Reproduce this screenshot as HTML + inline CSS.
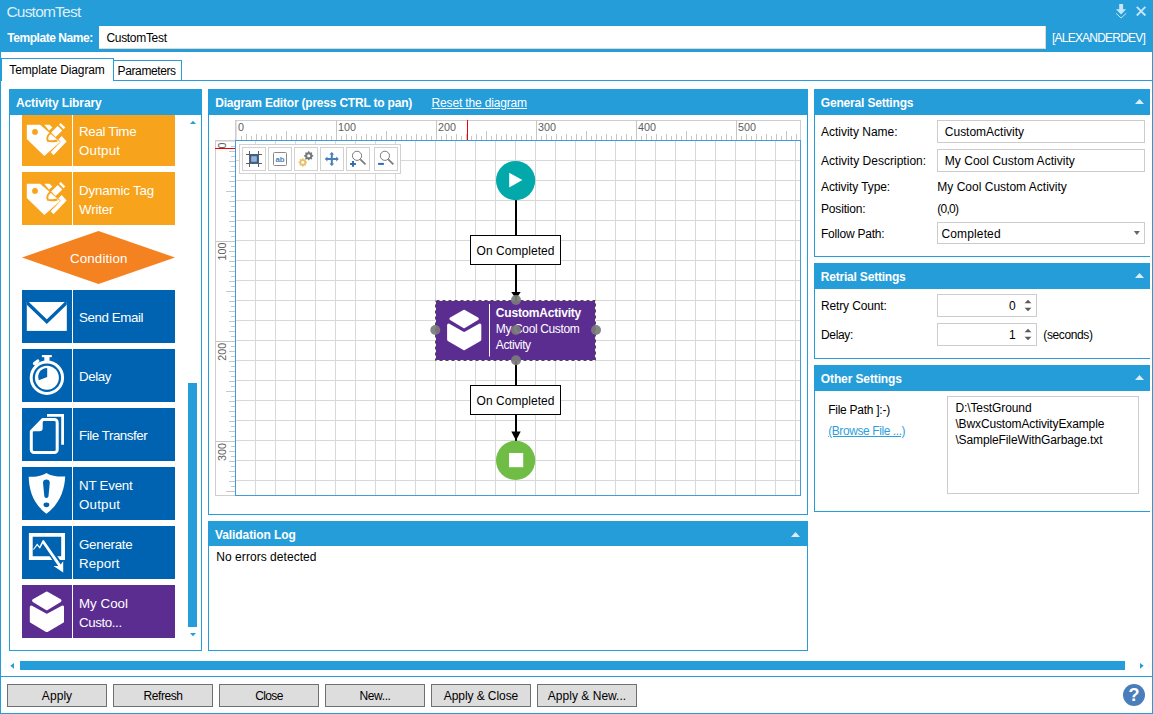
<!DOCTYPE html>
<html lang="en">
<head>
<meta charset="utf-8">
<title>CustomTest</title>
<style>
html,body{margin:0;padding:0;background:#fff;}
body{width:1153px;height:714px;overflow:hidden;font-family:"Liberation Sans",sans-serif;}
#app{position:relative;width:1153px;height:714px;overflow:hidden;background:#fff;}
#app div,#app svg,#app span{position:absolute;box-sizing:border-box;}
.t{white-space:pre;font-family:"Liberation Sans",sans-serif;}
.b{background:#259dd9;}
.pn{border:1px solid #259dd9;background:#fff;}
.hd{background:#259dd9;}
.in{border:1px solid #cecbcb;background:#fff;}
.btn{border:1px solid #707070;background:#dddddd;height:23px;top:684px;width:100px;}
.tile{width:153px;height:53px;left:22px;}
.tile i{position:absolute;left:50px;top:0;width:1px;height:53px;background:#fff;}
.tb{width:24px;height:24px;top:147px;border:1px solid #d3d0d0;background:#fff;}

</style>
</head>
<body>
<div id="app">
<!-- window frame -->
<div class="b" style="left:0;top:0;width:1153px;height:52px;"></div>
<div class="b" style="left:0;top:52px;width:1px;height:662px;"></div>
<div class="b" style="left:1152px;top:52px;width:1px;height:662px;"></div>
<div class="b" style="left:0;top:713px;width:1153px;height:1px;"></div>
<div class="b" style="left:0;top:676px;width:1153px;height:1px;"></div>
<!-- header controls -->
<div style="left:99px;top:26px;width:947px;height:23px;background:#fff;border-right:1px solid #e3d9cf;border-bottom:1px solid #e3d9cf;"></div>
<svg style="left:1112px;top:2px;" width="38" height="20" viewBox="0 0 38 20">
  <g fill="#c6e6f7" stroke="none">
    <path d="M7.2 2h3.9v5.2h3L9.1 12.6 3.9 7.2h3.3z"/>
  </g>
  <path d="M4 11.3l5.1 4.7 5.1-4.7" fill="none" stroke="#c6e6f7" stroke-width="1"/>
  <path d="M24.8 4.9l8.6 8.6M33.4 4.9l-8.6 8.6" fill="none" stroke="#c6e6f7" stroke-width="1.8"/>
</svg>
<!-- tabs -->
<div class="b" style="left:1px;top:80px;width:1151px;height:1px;"></div>
<div style="left:113px;top:60px;width:69px;height:21px;border:1px solid #259dd9;background:#fff;"></div>
<div style="left:1px;top:58px;width:113px;height:23px;border:1px solid #259dd9;border-bottom:none;background:#fff;"></div>
<!-- panels -->
<div class="pn" style="left:9px;top:89px;width:193px;height:562px;"></div>
<div class="hd" style="left:9px;top:89px;width:193px;height:26px;"></div>
<div class="pn" style="left:208px;top:89px;width:600px;height:426px;"></div>
<div class="hd" style="left:208px;top:89px;width:600px;height:26px;"></div>
<div class="pn" style="left:208px;top:521px;width:600px;height:130px;"></div>
<div class="hd" style="left:208px;top:521px;width:600px;height:25px;"></div>
<div class="pn" style="left:814px;top:89px;width:340px;height:168px;"></div>
<div class="hd" style="left:814px;top:89px;width:336px;height:26px;"></div>
<div class="pn" style="left:814px;top:263px;width:340px;height:96px;"></div>
<div class="hd" style="left:814px;top:263px;width:336px;height:26px;"></div>
<div class="pn" style="left:814px;top:365px;width:340px;height:147px;"></div>
<div class="hd" style="left:814px;top:365px;width:336px;height:26px;"></div>
<div style="left:1150px;top:82px;width:2px;height:580px;background:#fff;"></div>
<div class="b" style="left:1152px;top:52px;width:1px;height:662px;"></div>
<!-- header collapse arrows -->
<svg style="left:791px;top:532px;" width="9" height="5" viewBox="0 0 9 5"><path d="M0 5L4.500 0 9 5z" fill="#d9eefa"/></svg>
<svg style="left:1135px;top:99.200px;" width="9" height="5" viewBox="0 0 9 5"><path d="M0 5L4.500 0 9 5z" fill="#d9eefa"/></svg>
<svg style="left:1135px;top:273.200px;" width="9" height="5" viewBox="0 0 9 5"><path d="M0 5L4.500 0 9 5z" fill="#d9eefa"/></svg>
<svg style="left:1135px;top:375.200px;" width="9" height="5" viewBox="0 0 9 5"><path d="M0 5L4.500 0 9 5z" fill="#d9eefa"/></svg>

<!-- activity library tiles -->
<div style="left:10px;top:115px;width:191px;height:535px;overflow:hidden;">
<div style="left:-10px;top:-115px;width:210px;height:700px;">
<!-- tag tiles -->
<div class="tile" style="top:113px;background:#f7a31c;"><i></i>
<svg width="50" height="53" viewBox="0 0 50 53" style="left:0;top:0;">
  <path d="M4.8 11.8H18.1L38.2 29 22.3 42.9 4.8 26.1z" fill="#fff"/>
  <path d="M22.3 11.8h5.2l2.9 2.6-3.4 3.1z" fill="#fff"/>
  <circle cx="13" cy="18.9" r="2.9" fill="#f7a31c"/>
  <path d="M39.7 23l4.9 5.6-13.1 13.6-2.8-2.9 10-10.3-2.2-2.8z" fill="#fff"/>
  <path d="M29 19.5l8.2-8.2 4.8 4.8-8.2 8.2" fill="none" stroke="#f7a31c" stroke-width="2.4"/>
  <path d="M29.2 19.6c-3.5 2-4.6 5.5-3.3 8.3 3.4.8 6.4.5 9.6-.4" fill="none" stroke="#f7a31c" stroke-width="2"/>
  <path d="M35.7 12.9l4.6 4.6-6.7 6.5-4.4-4.4z" fill="#fff"/>
  <path d="M38.7 10.1l4.6 4.5-1.7 1.7-4.6-4.5z" fill="#fff"/>
  <path d="M27.7 21.8l3.8 3.4-4.2.4z" fill="#fff"/>
</svg></div>
<div class="tile" style="top:172px;background:#f7a31c;"><i></i>
<svg width="50" height="53" viewBox="0 0 50 53" style="left:0;top:0;">
  <path d="M4.8 11.8H18.1L38.2 29 22.3 42.9 4.8 26.1z" fill="#fff"/>
  <path d="M22.3 11.8h5.2l2.9 2.6-3.4 3.1z" fill="#fff"/>
  <circle cx="13" cy="18.9" r="2.9" fill="#f7a31c"/>
  <path d="M39.7 23l4.9 5.6-13.1 13.6-2.8-2.9 10-10.3-2.2-2.8z" fill="#fff"/>
  <path d="M29 19.5l8.2-8.2 4.8 4.8-8.2 8.2" fill="none" stroke="#f7a31c" stroke-width="2.4"/>
  <path d="M29.2 19.6c-3.5 2-4.6 5.5-3.3 8.3 3.4.8 6.4.5 9.6-.4" fill="none" stroke="#f7a31c" stroke-width="2"/>
  <path d="M35.7 12.9l4.6 4.6-6.7 6.5-4.4-4.4z" fill="#fff"/>
  <path d="M38.7 10.1l4.6 4.5-1.7 1.7-4.6-4.5z" fill="#fff"/>
  <path d="M27.7 21.8l3.8 3.4-4.2.4z" fill="#fff"/>
</svg></div>
<!-- condition -->
<svg width="153" height="53" viewBox="0 0 153 53" style="left:22px;top:231px;"><path d="M0 26.5L76.5 0 153 26.5 76.5 53z" fill="#f58220"/></svg>
<!-- send email -->
<div class="tile" style="top:290px;background:#0063b1;"><i></i>
<svg width="50" height="53" viewBox="0 0 50 53" style="left:0;top:0;">
  <defs><clipPath id="env"><rect x="4.8" y="12" width="40" height="28.9"/></clipPath></defs>
  <rect x="4.8" y="12" width="40" height="28.9" fill="#fff"/>
  <path d="M2 9.7l22.8 22 22.8-22" fill="none" stroke="#0063b1" stroke-width="3.4" clip-path="url(#env)"/>
</svg></div>
<!-- delay -->
<div class="tile" style="top:349px;background:#0063b1;"><i></i>
<svg width="50" height="53" viewBox="0 0 50 53" style="left:0;top:0;">
  <circle cx="24.9" cy="28.7" r="15.7" fill="none" stroke="#fff" stroke-width="3"/>
  <circle cx="24.9" cy="28.7" r="12" fill="#fff"/>
  <path d="M25.200 27.900V18.900A9 9 0 0 0 16.860 31.270z" fill="#0063b1"/>
  <rect x="19.9" y="6" width="9.9" height="2.2" fill="#fff"/>
  <rect x="22.3" y="7" width="5.2" height="6" fill="#fff"/>
  <path d="M12.500 14.600l3.300-2.600" stroke="#fff" stroke-width="3.300" stroke-linecap="round"/>
</svg></div>
<!-- file transfer -->
<div class="tile" style="top:408px;background:#0063b1;"><i></i>
<svg width="50" height="53" viewBox="0 0 50 53" style="left:0;top:0;">
  <path d="M20.7 11.6H32.4a2.8 2.8 0 0 1 2.8 2.8V41.7a2.8 2.8 0 0 1-2.8 2.8H12.1a2.8 2.8 0 0 1-2.8-2.8V23.2z" fill="none" stroke="#fff" stroke-width="3" stroke-linejoin="round"/>
  <path d="M9.3 23.2L20.7 11.6V20q0 3.2-3.2 3.2z" fill="#fff"/>
  <path d="M25 7.3H40.6V36.7" fill="none" stroke="#fff" stroke-width="2.8"/>
</svg></div>
<!-- nt event -->
<div class="tile" style="top:467px;background:#0063b1;"><i></i>
<svg width="50" height="53" viewBox="0 0 50 53" style="left:0;top:0;">
  <path d="M24.4 5.9C20 9 12.5 10 6.7 9.8 7 22 10.4 36.4 24.4 46.8 38.4 36.4 42.6 22 43.2 9.5 36.8 10 29 9 24.4 5.9z" fill="#fff"/>
  <path d="M24.4 12.5c2 0 3.4 1.2 3.4 3.2l-1.3 13.4c-.1 1.3-.9 2-2.1 2s-2-.7-2.1-2L21 15.700c0-2 1.400-3.200 3.400-3.200z" fill="#0063b1"/>
  <ellipse cx="24.400" cy="37.800" rx="2.900" ry="2.400" fill="#0063b1"/>
</svg></div>
<!-- generate report -->
<div class="tile" style="top:526px;background:#0063b1;"><i></i>
<svg width="50" height="53" viewBox="0 0 50 53" style="left:0;top:0;">
  <path d="M8.800 8.800H41.100V32.200H8.800z" fill="none" stroke="#fff" stroke-width="3.800"/>
  <path d="M27.500 24.200L39.500 42" fill="none" stroke="#0063b1" stroke-width="6.400"/>
  <path d="M11.100 23.300L15.100 17.600 17.600 20.600 20.600 14.200 21.900 14.200 38.700 38.500 41.200 35.300V46.600L31.500 39.900 36.200 39.900 20.800 17.400 17.900 22.800 15.200 19.600 11.700 24z" fill="#fff"/>
</svg></div>
<!-- custom -->
<div class="tile" style="top:585px;background:#5c2d91;"><i></i>
<svg width="50" height="53" viewBox="0 0 50 53" style="left:0;top:0;">
  <path d="M24.800 8.100L38 15.600 24.800 23.700 11.600 15.600z" fill="#fff" stroke="#fff" stroke-width="3" stroke-linejoin="round"/>
  <path d="M9.300 22L24.800 30.600 40.500 22V36.500L24.800 45.600 9.300 36.500z" fill="#fff" stroke="#fff" stroke-width="3" stroke-linejoin="round"/>
</svg></div>
</div></div>
<!-- vertical scrollbar of library -->
<svg style="left:190px;top:120px;" width="6" height="4" viewBox="0 0 6 4"><path d="M0 4L3 .8 6 4z" fill="#259dd9"/></svg>
<div class="b" style="left:188px;top:383px;width:9px;height:244px;"></div>
<svg style="left:190px;top:633px;" width="6" height="4" viewBox="0 0 6 4"><path d="M0 0L3 3.200 6 0z" fill="#259dd9"/></svg>

<!-- diagram editor: rulers -->
<div style="left:235px;top:120px;width:566px;height:20px;border:1px solid #cfcccc;border-bottom:none;background:#fff;box-shadow:inset 1px 0 0 #e3e1e1;"></div>
<div style="left:215px;top:140px;width:21px;height:356px;border:1px solid #cfcccc;border-right:none;background:#fff;box-shadow:inset 0 1px 0 #e6e4e4;"></div>
<svg style="left:215px;top:120px;" width="586" height="376" viewBox="0 0 586 376" shape-rendering="crispEdges">
<path d="M26.5 16V20M31.5 14V20M36.5 16V20M41.5 14V20M46.5 16V20M51.5 14V20M56.5 16V20M61.5 14V20M66.5 16V20M71.5 11V20M76.5 16V20M81.5 14V20M86.5 16V20M91.5 14V20M96.5 16V20M101.5 14V20M106.5 16V20M111.5 14V20M116.5 16V20M121.5 0V20M126.5 16V20M131.5 14V20M136.5 16V20M141.5 14V20M146.5 16V20M151.5 14V20M156.5 16V20M161.5 14V20M166.5 16V20M171.5 11V20M176.5 16V20M181.5 14V20M186.5 16V20M191.5 14V20M196.5 16V20M201.5 14V20M206.5 16V20M211.5 14V20M216.5 16V20M221.5 0V20M226.5 16V20M231.5 14V20M236.5 16V20M241.5 14V20M246.5 16V20M251.5 14V20M256.5 16V20M261.5 14V20M266.5 16V20M271.5 11V20M276.5 16V20M281.5 14V20M286.5 16V20M291.5 14V20M296.5 16V20M301.5 14V20M306.5 16V20M311.5 14V20M316.5 16V20M321.5 0V20M326.5 16V20M331.5 14V20M336.5 16V20M341.5 14V20M346.5 16V20M351.5 14V20M356.5 16V20M361.5 14V20M366.5 16V20M371.5 11V20M376.5 16V20M381.5 14V20M386.5 16V20M391.5 14V20M396.5 16V20M401.5 14V20M406.5 16V20M411.5 14V20M416.5 16V20M421.5 0V20M426.5 16V20M431.5 14V20M436.5 16V20M441.5 14V20M446.5 16V20M451.5 14V20M456.5 16V20M461.5 14V20M466.5 16V20M471.5 11V20M476.5 16V20M481.5 14V20M486.5 16V20M491.5 14V20M496.5 16V20M501.5 14V20M506.5 16V20M511.5 14V20M516.5 16V20M521.5 0V20M526.5 16V20M531.5 14V20M536.5 16V20M541.5 14V20M546.5 16V20M551.5 14V20M556.5 16V20M561.5 14V20M566.5 16V20M571.5 11V20M576.5 16V20M581.5 14V20" stroke="#c8c5c5" stroke-width="1" fill="none"/>
<path d="M16 26.5H20M14 31.5H20M16 36.5H20M14 41.5H20M16 46.5H20M14 51.5H20M16 56.5H20M14 61.5H20M16 66.5H20M11 71.5H20M16 76.5H20M14 81.5H20M16 86.5H20M14 91.5H20M16 96.5H20M14 101.5H20M16 106.5H20M14 111.5H20M16 116.5H20M0 121.5H20M16 126.5H20M14 131.5H20M16 136.5H20M14 141.5H20M16 146.5H20M14 151.5H20M16 156.5H20M14 161.5H20M16 166.5H20M11 171.5H20M16 176.5H20M14 181.5H20M16 186.5H20M14 191.5H20M16 196.5H20M14 201.5H20M16 206.5H20M14 211.5H20M16 216.5H20M0 221.5H20M16 226.5H20M14 231.5H20M16 236.5H20M14 241.5H20M16 246.5H20M14 251.5H20M16 256.5H20M14 261.5H20M16 266.5H20M11 271.5H20M16 276.5H20M14 281.5H20M16 286.5H20M14 291.5H20M16 296.5H20M14 301.5H20M16 306.5H20M14 311.5H20M16 316.5H20M0 321.5H20M16 326.5H20M14 331.5H20M16 336.5H20M14 341.5H20M16 346.5H20M14 351.5H20M16 356.5H20M14 361.5H20M16 366.5H20M11 371.5H20" stroke="#c8c5c5" stroke-width="1" fill="none"/>
<path d="M252.500 0V20M0 28.500H20" stroke="#f00000" stroke-width="1" fill="none"/>
<text transform="translate(10.800 22.4) rotate(-90)" text-anchor="end" font-family="Liberation Sans, sans-serif" font-size="10.800" fill="#5e5e5e">0</text>
<text transform="translate(10.800 122.6) rotate(-90)" text-anchor="end" font-family="Liberation Sans, sans-serif" font-size="10.800" fill="#5e5e5e">100</text>
<text transform="translate(10.800 222.8) rotate(-90)" text-anchor="end" font-family="Liberation Sans, sans-serif" font-size="10.800" fill="#5e5e5e">200</text>
<text transform="translate(10.800 323.0) rotate(-90)" text-anchor="end" font-family="Liberation Sans, sans-serif" font-size="10.800" fill="#5e5e5e">300</text>
</svg>
<div style="left:235px;top:140px;width:566px;height:356px;border:1px solid #3f9ddb;background-color:#fff;background-image:linear-gradient(to right,#d8d8d8 1px,transparent 1px),linear-gradient(to bottom,#d8d8d8 1px,transparent 1px);background-size:20px 20px;background-position:19px 19px;"></div>
<div style="left:239px;top:144px;width:162px;height:30px;border:1px solid #d2d2d2;background:#fff;"></div>
<div class="tb" style="left:242px;"></div>
<div class="tb" style="left:268px;"></div>
<div class="tb" style="left:294px;"></div>
<div class="tb" style="left:320px;"></div>
<div class="tb" style="left:346px;"></div>
<div class="tb" style="left:374px;"></div>
<svg style="left:242px;top:147px;" width="24" height="24" viewBox="0 0 24 24">
  <path d="M7.500 4V20M16.500 4V20M4 7.500H20M4 16.500H20" stroke="#5f5f5f" stroke-width="1" fill="none" shape-rendering="crispEdges"/>
  <rect x="8.600" y="8.600" width="6.800" height="6.800" fill="#95b3d7" stroke="#2e5f9e" stroke-width="1.200"/>
</svg>
<svg style="left:268px;top:147px;" width="24" height="24" viewBox="0 0 24 24">
  <rect x="5.500" y="5.500" width="13" height="13" rx="1" fill="#fff" stroke="#8a8a8a" stroke-width="1"/>
  <text x="12" y="15" text-anchor="middle" font-family="Liberation Sans, sans-serif" font-size="7.800" font-weight="700" fill="#4f81bd">ab</text>
</svg>
<svg style="left:294px;top:147px;" width="24" height="24" viewBox="0 0 24 24"><path d="M13.06 14.84L13.06 15.96L12.04 16.27L11.71 17.07L12.21 18.02L11.42 18.81L10.47 18.31L9.67 18.64L9.36 19.66L8.24 19.66L7.93 18.64L7.13 18.31L6.18 18.81L5.39 18.02L5.89 17.07L5.56 16.27L4.54 15.96L4.54 14.84L5.56 14.53L5.89 13.73L5.39 12.78L6.18 11.99L7.13 12.49L7.93 12.16L8.24 11.14L9.36 11.14L9.67 12.16L10.47 12.49L11.42 11.99L12.21 12.78L11.71 13.73L12.04 14.53z" fill="#ebc067"/><circle cx="8.8" cy="15.4" r="1.46" fill="#fff"/><path d="M19.26 8.20L19.26 9.40L18.16 9.73L17.81 10.59L18.35 11.60L17.50 12.45L16.49 11.91L15.63 12.26L15.30 13.36L14.10 13.36L13.77 12.26L12.91 11.91L11.90 12.45L11.05 11.60L11.59 10.59L11.24 9.73L10.14 9.40L10.14 8.20L11.24 7.87L11.59 7.01L11.05 6.00L11.90 5.15L12.91 5.69L13.77 5.34L14.10 4.24L15.30 4.24L15.63 5.34L16.49 5.69L17.50 5.15L18.35 6.00L17.81 7.01L18.16 7.87z" fill="#727a7b"/><circle cx="14.7" cy="8.8" r="1.56" fill="#fff"/></svg>
<svg style="left:320px;top:147px;" width="24" height="24" viewBox="0 0 24 24">
  <path d="M11.800 5l2.400 2.600h-1.400v3.400h3.400v-1.400l2.600 2.400-2.600 2.400v-1.400h-3.400v3.400h1.400l-2.400 2.600-2.400-2.600h1.400v-3.400h-3.400v1.400l-2.600-2.400 2.600-2.400v1.400h3.400v-3.400h-1.400z" fill="#4a7ebb"/>
</svg>
<svg style="left:346px;top:147px;" width="24" height="24" viewBox="0 0 24 24">
  <circle cx="11" cy="8.800" r="4.600" fill="#fff" stroke="#7a7a7a" stroke-width="1"/>
  <path d="M14.300 12.300l5.200 5" stroke="#7a7a7a" stroke-width="1.700" fill="none"/>
  <path d="M4.100 16.900h5.800M7 14v5.800" stroke="#2f6db5" stroke-width="2" fill="none"/>
</svg>
<svg style="left:374px;top:147px;" width="24" height="24" viewBox="0 0 24 24">
  <circle cx="10.900" cy="8.800" r="4.600" fill="#fff" stroke="#7a7a7a" stroke-width="1"/>
  <path d="M14.200 12.300l5.200 5" stroke="#7a7a7a" stroke-width="1.700" fill="none"/>
  <path d="M4.100 16.900h5.800" stroke="#2f6db5" stroke-width="2" fill="none"/>
</svg>
<svg style="left:420px;top:150px;" width="200" height="340" viewBox="420 150 200 340">
  <!-- connectors -->
  <path d="M516 200V300M516 360V441" stroke="#000" stroke-width="2" fill="none"/>
  <path d="M511.300 292h9.400L516 299z" fill="#000"/>
  <path d="M511.300 431.500h9.400L516 440.500z" fill="#000"/>
  <!-- start / end -->
  <circle cx="515.600" cy="180.600" r="19.600" fill="#03a8aa"/>
  <path d="M509.200 172.800v14.600l13.200-7.300z" fill="#fff"/>
  <circle cx="515.600" cy="460.400" r="19.600" fill="#70bd45"/>
  <rect x="509" y="453" width="14.200" height="14.200" fill="#fff"/>
  <!-- labels -->
  <rect x="470.500" y="235.500" width="90" height="29" fill="#fff" stroke="#000" stroke-width="1"/>
  <rect x="470.500" y="385.500" width="90" height="29" fill="#fff" stroke="#000" stroke-width="1"/>
  <!-- activity -->
  <rect x="435.500" y="300.500" width="160" height="60" fill="#5c2d91" stroke="#f4f2f7" stroke-width="1"/>
  <rect x="435.500" y="300.500" width="160" height="60" fill="none" stroke="#4a4a4a" stroke-width="1" stroke-dasharray="3 3" stroke-dashoffset="-1"/>
  <path d="M489.500 304v52.500" stroke="#fff" stroke-width="1"/>
  <g transform="translate(439.300 303.100)">
    <path d="M24.800 8.100L38 15.600 24.800 23.700 11.600 15.600z" fill="#fff" stroke="#fff" stroke-width="3" stroke-linejoin="round"/>
    <path d="M9.300 22L24.800 30.600 40.500 22V36.500L24.800 45.600 9.300 36.500z" fill="#fff" stroke="#fff" stroke-width="3" stroke-linejoin="round"/>
  </g>
</svg>

<!-- general settings -->
<div class="in" style="left:937px;top:120px;width:208px;height:23px;"></div>
<div class="in" style="left:937px;top:149px;width:208px;height:23px;"></div>
<div class="in" style="left:937px;top:222px;width:208px;height:22px;"></div>
<svg style="left:1133px;top:231px;" width="8" height="5" viewBox="0 0 8 5"><path d="M.900 .100h6L3.900 3.900z" fill="#666"/></svg>
<!-- retrial settings -->
<div class="in" style="left:937px;top:294px;width:100px;height:23px;"></div>
<div class="in" style="left:937px;top:323px;width:100px;height:23px;"></div>
<svg style="left:1024px;top:299px;" width="8" height="13" viewBox="0 0 8 13"><path d="M.600 4.200L4 .800 7.400 4.200M.600 8.800L4 12.200 7.400 8.800" fill="#5a5a5a" stroke="none"/></svg>
<svg style="left:1024px;top:328px;" width="8" height="13" viewBox="0 0 8 13"><path d="M.600 4.200L4 .800 7.400 4.200M.600 8.800L4 12.200 7.400 8.800" fill="#5a5a5a" stroke="none"/></svg>
<!-- other settings -->
<div class="in" style="left:947px;top:396px;width:192px;height:98px;"></div>

<!-- horizontal scrollbar -->
<svg style="left:10px;top:663.200px;" width="4" height="6" viewBox="0 0 4 6"><path d="M4 0L.300 2.850 4 5.700z" fill="#259dd9"/></svg>
<div class="b" style="left:20px;top:661px;width:1105px;height:9px;"></div>
<svg style="left:1140px;top:663.200px;" width="4" height="6" viewBox="0 0 4 6"><path d="M0 0L3.700 2.850 0 5.700z" fill="#259dd9"/></svg>
<!-- buttons -->
<div class="btn" style="left:7px;"></div>
<div class="btn" style="left:113px;"></div>
<div class="btn" style="left:219px;"></div>
<div class="btn" style="left:325px;"></div>
<div class="btn" style="left:431px;"></div>
<div class="btn" style="left:537px;"></div>
<!-- help -->
<svg style="left:1123px;top:684px;" width="22" height="22" viewBox="0 0 22 22">
  <circle cx="11" cy="11" r="11" fill="#4a7ebb"/>
  <text x="10.900" y="17.400" text-anchor="middle" font-family="Liberation Sans, sans-serif" font-size="18" font-weight="700" fill="#fff">?</text>
</svg>

<!-- text layer -->
<span class="t" id="t0" style="top:3.93px;font-size:15.5px;line-height:16px;color:rgba(255,255,255,.86);letter-spacing:-0.780px;left:6.40px;">CustomTest</span>
<span class="t" id="t1" style="top:29.94px;font-size:12px;line-height:16px;color:#fff;font-weight:700;letter-spacing:-0.447px;left:7.20px;">Template Name:</span>
<span class="t" id="t2" style="top:29.94px;font-size:12px;line-height:16px;color:#000;letter-spacing:-0.302px;left:106.40px;">CustomTest</span>
<span class="t" id="t3" style="top:29.94px;font-size:12px;line-height:16px;color:#fff;letter-spacing:-0.785px;left:1052.00px;">[ALEXANDERDEV]</span>
<span class="t" id="t4" style="top:61.94px;font-size:12px;line-height:16px;color:#000;letter-spacing:-0.125px;left:9.30px;">Template Diagram</span>
<span class="t" id="t5" style="top:62.84px;font-size:12px;line-height:16px;color:#000;letter-spacing:-0.391px;left:117.60px;">Parameters</span>
<span class="t" id="t6" style="top:94.74px;font-size:12px;line-height:16px;color:#fff;font-weight:700;letter-spacing:-0.113px;left:16.00px;">Activity Library</span>
<span class="t" id="t7" style="top:94.94px;font-size:12px;line-height:16px;color:#fff;font-weight:700;letter-spacing:-0.204px;left:215.20px;">Diagram Editor (press CTRL to pan)</span>
<span class="t" id="t8" style="top:94.94px;font-size:12px;line-height:16px;color:#fff;letter-spacing:-0.160px;left:431.60px;text-decoration:underline;">Reset the diagram</span>
<span class="t" id="t9" style="top:94.74px;font-size:12px;line-height:16px;color:#fff;font-weight:700;letter-spacing:-0.179px;left:820.80px;">General Settings</span>
<span class="t" id="t10" style="top:268.84px;font-size:12px;line-height:16px;color:#fff;font-weight:700;letter-spacing:-0.203px;left:820.80px;">Retrial Settings</span>
<span class="t" id="t11" style="top:370.94px;font-size:12px;line-height:16px;color:#fff;font-weight:700;letter-spacing:-0.116px;left:820.80px;">Other Settings</span>
<span class="t" id="t12" style="top:526.84px;font-size:12px;line-height:16px;color:#fff;font-weight:700;letter-spacing:-0.090px;left:215.00px;">Validation Log</span>
<span class="t" id="t13" style="top:549.14px;font-size:12px;line-height:16px;color:#000;letter-spacing:0.047px;left:216.30px;">No errors detected</span>
<span class="t" id="t14" style="top:123.88px;font-size:13.33px;line-height:16px;color:#fff;letter-spacing:-0.303px;left:79.00px;">Real Time</span>
<span class="t" id="t15" style="top:142.68px;font-size:13.33px;line-height:16px;color:#fff;letter-spacing:0.199px;left:79.00px;">Output</span>
<span class="t" id="t16" style="top:182.88px;font-size:13.33px;line-height:16px;color:#fff;letter-spacing:-0.152px;left:79.00px;">Dynamic Tag</span>
<span class="t" id="t17" style="top:201.68px;font-size:13.33px;line-height:16px;color:#fff;letter-spacing:-0.151px;left:79.00px;">Writer</span>
<span class="t" id="t18" style="top:250.68px;font-size:13.33px;line-height:16px;color:#fff;letter-spacing:0.137px;left:70.00px;">Condition</span>
<span class="t" id="t19" style="top:310.08px;font-size:13.33px;line-height:16px;color:#fff;letter-spacing:-0.400px;left:79.00px;">Send Email</span>
<span class="t" id="t20" style="top:369.08px;font-size:13.33px;line-height:16px;color:#fff;letter-spacing:-0.403px;left:79.00px;">Delay</span>
<span class="t" id="t21" style="top:428.08px;font-size:13.33px;line-height:16px;color:#fff;letter-spacing:-0.447px;left:79.00px;">File Transfer</span>
<span class="t" id="t22" style="top:477.88px;font-size:13.33px;line-height:16px;color:#fff;letter-spacing:-0.221px;left:79.00px;">NT Event</span>
<span class="t" id="t23" style="top:496.68px;font-size:13.33px;line-height:16px;color:#fff;letter-spacing:0.199px;left:79.00px;">Output</span>
<span class="t" id="t24" style="top:536.88px;font-size:13.33px;line-height:16px;color:#fff;letter-spacing:-0.265px;left:79.00px;">Generate</span>
<span class="t" id="t25" style="top:555.68px;font-size:13.33px;line-height:16px;color:#fff;letter-spacing:0.080px;left:79.00px;">Report</span>
<span class="t" id="t26" style="top:595.88px;font-size:13.33px;line-height:16px;color:#fff;letter-spacing:0.013px;left:79.00px;">My Cool</span>
<span class="t" id="t27" style="top:614.68px;font-size:13.33px;line-height:16px;color:#fff;letter-spacing:-0.403px;left:79.00px;">Custo...</span>
<span class="t" id="t28" style="top:124.14px;font-size:12px;line-height:16px;color:#000;letter-spacing:-0.011px;left:821.00px;">Activity Name:</span>
<span class="t" id="t29" style="top:153.34px;font-size:12px;line-height:16px;color:#000;letter-spacing:0.022px;left:821.00px;">Activity Description:</span>
<span class="t" id="t30" style="top:178.84px;font-size:12px;line-height:16px;color:#000;letter-spacing:-0.104px;left:821.00px;">Activity Type:</span>
<span class="t" id="t31" style="top:200.94px;font-size:12px;line-height:16px;color:#000;letter-spacing:-0.174px;left:821.00px;">Position:</span>
<span class="t" id="t32" style="top:225.74px;font-size:12px;line-height:16px;color:#000;letter-spacing:-0.218px;left:821.00px;">Follow Path:</span>
<span class="t" id="t33" style="top:124.14px;font-size:12px;line-height:16px;color:#000;letter-spacing:-0.004px;left:944.80px;">CustomActivity</span>
<span class="t" id="t34" style="top:153.34px;font-size:12px;line-height:16px;color:#000;letter-spacing:0.031px;left:944.80px;">My Cool Custom Activity</span>
<span class="t" id="t35" style="top:178.84px;font-size:12px;line-height:16px;color:#000;letter-spacing:0.008px;left:937.30px;">My Cool Custom Activity</span>
<span class="t" id="t36" style="top:200.94px;font-size:12px;line-height:16px;color:#000;letter-spacing:-0.744px;left:937.30px;">(0,0)</span>
<span class="t" id="t37" style="top:225.74px;font-size:12px;line-height:16px;color:#000;letter-spacing:0.130px;left:941.50px;">Completed</span>
<span class="t" id="t38" style="top:298.04px;font-size:12px;line-height:16px;color:#000;letter-spacing:-0.139px;left:821.00px;">Retry Count:</span>
<span class="t" id="t39" style="top:327.14px;font-size:12px;line-height:16px;color:#000;letter-spacing:-0.336px;left:821.00px;">Delay:</span>
<span class="t" id="t40" style="top:298.04px;font-size:12px;line-height:16px;color:#000;right:137.40px;">0</span>
<span class="t" id="t41" style="top:327.14px;font-size:12px;line-height:16px;color:#000;right:137.40px;">1</span>
<span class="t" id="t42" style="top:327.14px;font-size:12px;line-height:16px;color:#000;letter-spacing:-0.374px;left:1043.30px;">(seconds)</span>
<span class="t" id="t43" style="top:402.14px;font-size:12px;line-height:16px;color:#000;letter-spacing:-0.258px;left:828.20px;">File Path ]:-)</span>
<span class="t" id="t44" style="top:422.94px;font-size:12px;line-height:16px;color:#2f9fdc;letter-spacing:-0.413px;left:828.20px;text-decoration:underline;">(Browse File ...)</span>
<span class="t" id="t45" style="top:400.04px;font-size:12px;line-height:16px;color:#000;letter-spacing:-0.099px;left:955.40px;">D:\TestGround</span>
<span class="t" id="t46" style="top:416.14px;font-size:12px;line-height:16px;color:#000;letter-spacing:-0.128px;left:955.40px;">\BwxCustomActivityExample</span>
<span class="t" id="t47" style="top:432.24px;font-size:12px;line-height:16px;color:#000;letter-spacing:-0.117px;left:955.40px;">\SampleFileWithGarbage.txt</span>
<span class="t" id="t48" style="top:242.84px;font-size:12px;line-height:16px;color:#000;letter-spacing:0.055px;left:476.50px;">On Completed</span>
<span class="t" id="t49" style="top:392.84px;font-size:12px;line-height:16px;color:#000;letter-spacing:0.055px;left:476.50px;">On Completed</span>
<span class="t" id="t50" style="top:305.04px;font-size:12px;line-height:16px;color:#fff;font-weight:700;letter-spacing:-0.195px;left:495.80px;">CustomActivity</span>
<span class="t" id="t51" style="top:320.84px;font-size:12px;line-height:16px;color:#fff;letter-spacing:-0.361px;left:495.80px;">My Cool Custom</span>
<span class="t" id="t52" style="top:336.64px;font-size:12px;line-height:16px;color:#fff;letter-spacing:-0.386px;left:495.80px;">Activity</span>
<span class="t" id="t53" style="top:118.96px;font-size:10.8px;line-height:16px;color:#5e5e5e;left:238.00px;">0</span>
<span class="t" id="t54" style="top:118.96px;font-size:10.8px;line-height:16px;color:#5e5e5e;left:338.00px;">100</span>
<span class="t" id="t55" style="top:118.96px;font-size:10.8px;line-height:16px;color:#5e5e5e;left:438.00px;">200</span>
<span class="t" id="t56" style="top:118.96px;font-size:10.8px;line-height:16px;color:#5e5e5e;left:538.00px;">300</span>
<span class="t" id="t57" style="top:118.96px;font-size:10.8px;line-height:16px;color:#5e5e5e;left:638.00px;">400</span>
<span class="t" id="t58" style="top:118.96px;font-size:10.8px;line-height:16px;color:#5e5e5e;left:738.00px;">500</span>
<span class="t" id="t59" style="top:688.24px;font-size:12px;line-height:16px;color:#000;letter-spacing:0.071px;left:-93.00px;width:300px;text-align:center;">Apply</span>
<span class="t" id="t60" style="top:688.24px;font-size:12px;line-height:16px;color:#000;letter-spacing:-0.457px;left:13.00px;width:300px;text-align:center;">Refresh</span>
<span class="t" id="t61" style="top:688.24px;font-size:12px;line-height:16px;color:#000;letter-spacing:-0.601px;left:119.00px;width:300px;text-align:center;">Close</span>
<span class="t" id="t62" style="top:688.24px;font-size:12px;line-height:16px;color:#000;letter-spacing:-0.362px;left:225.00px;width:300px;text-align:center;">New...</span>
<span class="t" id="t63" style="top:688.24px;font-size:12px;line-height:16px;color:#000;letter-spacing:-0.083px;left:331.00px;width:300px;text-align:center;">Apply &amp; Close</span>
<span class="t" id="t64" style="top:688.24px;font-size:12px;line-height:16px;color:#000;letter-spacing:0.031px;left:437.00px;width:300px;text-align:center;">Apply &amp; New...</span>
<!-- connection ports -->
<svg style="left:428px;top:293px;" width="176" height="74" viewBox="428 293 176 74">
  <g fill="#7b7b7b" fill-opacity=".92">
    <circle cx="516" cy="300" r="5"/>
    <circle cx="516" cy="360.300" r="5"/>
    <circle cx="435.300" cy="330" r="5"/>
    <circle cx="596" cy="330" r="5"/>
    <circle cx="516" cy="330" r="5"/>
  </g>
</svg>

</div>
</body>
</html>
